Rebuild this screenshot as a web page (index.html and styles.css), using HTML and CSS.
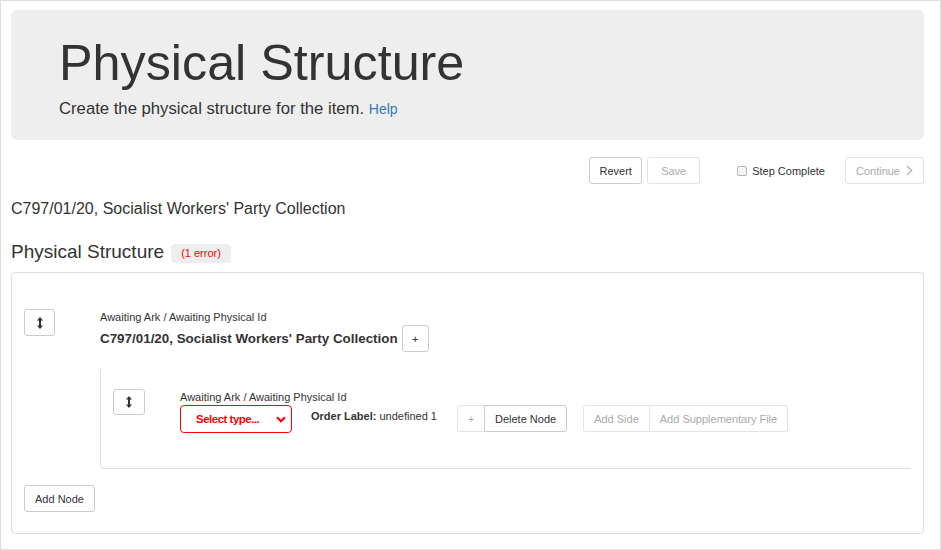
FILE: index.html
```html
<!DOCTYPE html>
<html>
<head>
<meta charset="utf-8">
<title>Physical Structure</title>
<link rel="stylesheet" href="styles.css">
</head>
<body>
<div class="frame">
  <div class="jumbotron">
    <h1 class="jt-title">Physical Structure</h1>
    <p class="jt-lead">Create the physical structure for the item. <a class="jt-help" href="#">Help</a></p>
  </div>

  <div class="toolbar">
    <button class="btn btn-revert">Revert</button>
    <button class="btn btn-disabled btn-save">Save</button>
    <label class="step"><span class="checkbox"></span>Step Complete</label>
    <button class="btn btn-disabled btn-continue">Continue
      <svg class="chev-right" width="7" height="11" viewBox="0 0 7 11"><path d="M1 1 L5.8 5.5 L1 10" fill="none" stroke="#b3b3b3" stroke-width="1.2"/></svg>
    </button>
  </div>

  <div class="item-title">C797/01/20, Socialist Workers' Party Collection</div>

  <div class="section-head">
    <h2 class="section-title">Physical Structure</h2>
    <span class="badge">(1 error)</span>
  </div>

  <div class="panel">
    <div class="node">
      <div class="node-handle">
        <button class="btn btn-move">
          <svg width="6" height="12" viewBox="0 0 6 12"><path d="M3 0 L6 3.5 H4 V8.5 H6 L3 12 L0 8.5 H2 V3.5 H0 Z" fill="#333"/></svg>
        </button>
      </div>
      <div class="node-body">
        <div class="node-label">Awaiting Ark / Awaiting Physical Id</div>
        <div class="node-title-row">
          <span class="node-title">C797/01/20, Socialist Workers' Party Collection</span>
          <button class="btn btn-plus">+</button>
        </div>

        <div class="child">
          <div class="node">
            <div class="node-handle child-handle">
              <button class="btn btn-move btn-move-child">
                <svg width="6" height="12" viewBox="0 0 6 12"><path d="M3 0 L6 3.5 H4 V8.5 H6 L3 12 L0 8.5 H2 V3.5 H0 Z" fill="#333"/></svg>
              </button>
            </div>
            <div class="node-body">
              <div class="node-label">Awaiting Ark / Awaiting Physical Id</div>
              <div class="child-controls">
                <div class="select">
                  <span class="select-text">Select type...</span>
                  <svg class="chev-down" width="10" height="7" viewBox="0 0 10 7"><path d="M1 1.2 L5 5.2 L9 1.2" fill="none" stroke="#f00" stroke-width="2.2"/></svg>
                </div>
                <div class="order-label"><b>Order Label:</b> undefined 1</div>
                <div class="btn-group group-node">
                  <button class="btn btn-faint">+</button>
                  <button class="btn">Delete Node</button>
                </div>
                <div class="btn-group group-add">
                  <button class="btn btn-disabled">Add Side</button>
                  <button class="btn btn-disabled">Add Supplementary File</button>
                </div>
              </div>
            </div>
          </div>
        </div>
      </div>
    </div>
    <button class="btn btn-add-node">Add Node</button>
  </div>
</div>
</body>
</html>
```

FILE: styles.css
```css
* { box-sizing: border-box; }

html, body {
  margin: 0;
  padding: 0;
  background: #fff;
}

body {
  font-family: "Liberation Sans", Arial, sans-serif;
  color: #333;
}

.frame {
  width: 941px;
  height: 550px;
  border: 1px solid #dedede;
  padding: 9px 16px 0 10px;
  overflow: hidden;
}

/* Jumbotron */
.jumbotron {
  background: #eee;
  border-radius: 6px;
  padding: 25px 48px 19px;
  height: 130px;
}

.jt-title {
  margin: 0 0 6px;
  font-size: 50.3px;
  line-height: 56px;
  font-weight: normal;
  color: #333;
}

.jt-lead {
  margin: 0;
  font-size: 16.7px;
  line-height: 24px;
  color: #333;
}

.jt-help {
  font-size: 14px;
  color: #337ab7;
  text-decoration: none;
}

/* Buttons */
.btn {
  display: inline-flex;
  align-items: center;
  justify-content: center;
  height: 27px;
  padding: 0 10px;
  font-family: "Liberation Sans", Arial, sans-serif;
  font-size: 11px;
  color: #333;
  background: #fff;
  border: 1px solid #ccc;
  border-radius: 3px;
  margin: 0;
  cursor: pointer;
}

.btn-disabled {
  color: #aaa;
  border-color: #e3e3e3;
}

.btn-faint {
  color: #aaa;
  border-color: #e3e3e3;
}

/* Toolbar */
.toolbar {
  display: flex;
  justify-content: flex-end;
  align-items: center;
  margin-top: 17px;
  height: 27px;
}

.btn-revert { margin-right: 5px; width: 53px; padding: 0; }
.btn-save { margin-right: 37px; width: 53px; padding: 0; }

.step {
  display: flex;
  align-items: center;
  font-size: 11px;
  color: #333;
  margin-right: 20px;
}

.checkbox {
  width: 10px;
  height: 10px;
  border: 1px solid #b5b5b5;
  border-radius: 2px;
  background: #f5f5f5;
  margin-right: 5px;
}

.btn-continue {
  gap: 6px;
  padding: 0 10px 0 10px;
}

/* Item title */
.item-title {
  margin-top: 14px;
  font-size: 16px;
  line-height: 22px;
  color: #333;
}

/* Section head */
.section-head {
  display: flex;
  align-items: flex-start;
  margin-top: 20px;
  height: 24px;
}

.section-title {
  margin: 0;
  font-size: 19px;
  line-height: 24px;
  font-weight: normal;
  color: #333;
}

.badge {
  display: inline-block;
  margin: 4px 0 0 7px;
  height: 19px;
  line-height: 19px;
  padding: 0 10px;
  background: #eee;
  color: #f00;
  font-size: 11px;
  border-radius: 4px;
}

/* Panel */
.panel {
  margin-top: 8px;
  border: 1px solid #ddd;
  border-radius: 4px;
  padding: 36px 11px 21px 12px;
}

.node {
  display: flex;
  align-items: flex-start;
}

.node-handle {
  width: 76px;
  flex: none;
}

.child-handle {
  width: 67px;
}

.btn-move {
  width: 31px;
  padding: 0;
}

.btn-move-child {
  width: 32px;
  height: 26px;
}

.node-body {
  flex: 1;
  min-width: 0;
}

.node-label {
  font-size: 11px;
  line-height: 16px;
  color: #333;
}

.node-title-row {
  display: flex;
  align-items: center;
  height: 27px;
}

.node-title {
  font-size: 13.4px;
  font-weight: bold;
  color: #333;
}

.btn-plus {
  margin-left: 4px;
  width: 27px;
  padding: 0;
}

/* Child node */
.child {
  margin-top: 16px;
  margin-right: 1px;
  border-left: 1px solid #ddd;
  border-bottom: 1px solid #ddd;
  border-radius: 4px 0 0 4px;
  padding: 21px 0 35px 12px;
}

.child-controls {
  display: flex;
  align-items: flex-start;
}

.select {
  display: flex;
  align-items: center;
  width: 112px;
  height: 28px;
  border: 1px solid #f00;
  border-radius: 4px;
  padding: 0 5px 0 15px;
  color: #f00;
  font-size: 11.5px;
  font-weight: bold;
  letter-spacing: -0.5px;
}

.chev-down {
  margin-left: auto;
}

.order-label {
  margin-left: 19px;
  padding-top: 4px;
  font-size: 11px;
  line-height: 15px;
  color: #333;
}

.btn-group {
  display: flex;
}

.btn-group .btn:first-child {
  border-radius: 3px 0 0 3px;
}

.btn-group .btn:last-child {
  border-radius: 0 3px 3px 0;
  margin-left: -1px;
}

.group-node {
  margin-left: 20px;
}

.group-node .btn-faint {
  width: 28px;
  padding: 0;
}

.group-add {
  margin-left: 16px;
}

.btn-add-node {
  margin-top: 16px;
}
```
